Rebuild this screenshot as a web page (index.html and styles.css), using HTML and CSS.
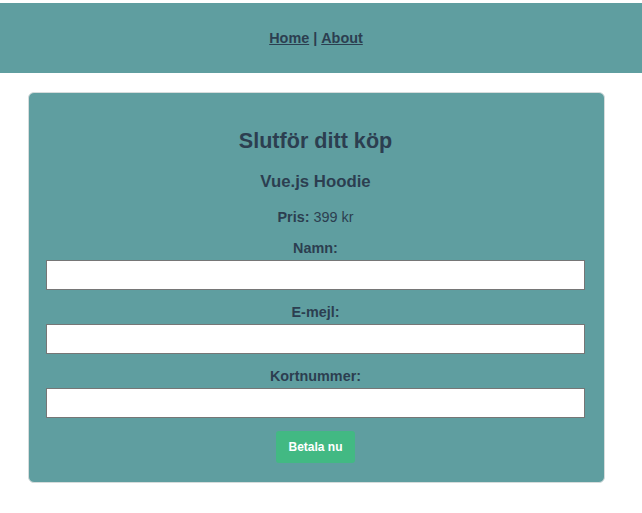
FILE: index.html
```html
<!DOCTYPE html>
<html lang="sv">
<head>
<meta charset="utf-8">
<title>Slutför ditt köp</title>
<link rel="stylesheet" href="styles.css">
</head>
<body>
<div class="app">
  <nav class="nav">
    <a href="#">Home</a> | <a href="#">About</a>
  </nav>
  <main class="card">
    <h2 class="title">Slutför ditt köp</h2>
    <h3 class="product">Vue.js Hoodie</h3>
    <p class="price"><strong>Pris:</strong> 399 kr</p>
    <form class="form">
      <label class="label" for="name">Namn:</label>
      <input class="input" id="name" type="text">
      <label class="label" for="email">E-mejl:</label>
      <input class="input" id="email" type="email">
      <label class="label" for="card">Kortnummer:</label>
      <input class="input" id="card" type="text">
      <button class="pay" type="button">Betala nu</button>
    </form>
  </main>
</div>
</body>
</html>
```

FILE: styles.css
```css
html, body {
  margin: 0;
  padding: 0;
  background: #fff;
}

.app {
  font-family: "Liberation Sans", Arial, Helvetica, sans-serif;
  color: #2c3e50;
  padding-top: 3px;
  text-align: center;
}

.nav {
  height: 70px;
  background: #5f9ea0;
  display: flex;
  align-items: center;
  justify-content: center;
  padding-right: 10px;
  font-size: 14.4px;
  font-weight: bold;
  line-height: 17px;
}

.nav a {
  color: #2c3e50;
  margin: 0 4px;
}

.card {
  margin: 19px 37px 0 28px;
  background: #5f9ea0;
  border: 1px solid #d6dcdc;
  border-radius: 6px;
  padding: 35px 19px 19px 17px;
}

.title {
  margin: 0;
  font-size: 21.6px;
  line-height: 25px;
  font-weight: bold;
}

.product {
  margin: 19px 0 0;
  font-size: 16.8px;
  line-height: 20px;
  font-weight: bold;
}

.price {
  margin: 17px 0 0;
  font-size: 14.4px;
  line-height: 17px;
}

.form {
  display: flex;
  flex-direction: column;
  align-items: center;
}

.label {
  display: block;
  margin-top: 14px;
  font-size: 14.4px;
  line-height: 17px;
  font-weight: bold;
}

.input {
  display: block;
  box-sizing: border-box;
  width: 100%;
  height: 30px;
  margin: 3px 0 0;
  border: 1px solid #767676;
  background: #fff;
  padding: 2px 4px;
}

.pay {
  margin-top: 13px;
  width: 79px;
  height: 32px;
  border: none;
  border-radius: 3px;
  background: #42b983;
  color: #fff;
  font-family: "Liberation Sans", Arial, Helvetica, sans-serif;
  font-size: 12px;
  font-weight: bold;
  padding: 0;
}
```
